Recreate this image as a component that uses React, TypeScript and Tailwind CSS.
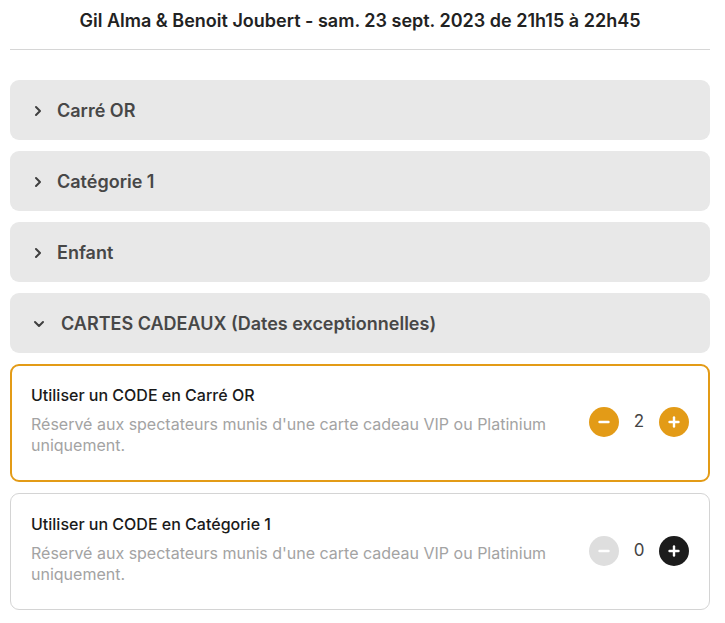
import { useState } from 'react';

type Section = { label: string; open?: boolean };

const SECTIONS: Section[] = [
  { label: 'Carré OR' },
  { label: 'Catégorie 1' },
  { label: 'Enfant' },
  { label: 'CARTES CADEAUX (Dates exceptionnelles)', open: true },
];

const DESC = "Réservé aux spectateurs munis d'une carte cadeau VIP ou Platinium uniquement.";

function ChevronRight() {
  return (
    <svg width="8" height="12" viewBox="0 0 8 12" className="ml-[1px]">
      <path d="M2 2l4 4-4 4" fill="none" stroke="#3f3f3f" strokeWidth="2" strokeLinecap="round" strokeLinejoin="round" />
    </svg>
  );
}

function ChevronDown() {
  return (
    <svg width="12" height="8" viewBox="0 0 12 8">
      <path d="M2 2l4 4 4-4" fill="none" stroke="#3f3f3f" strokeWidth="2" strokeLinecap="round" strokeLinejoin="round" />
    </svg>
  );
}

function RoundButton({ kind, tone }: { kind: 'minus' | 'plus'; tone: 'orange' | 'grey' | 'black' }) {
  const bg = tone === 'orange' ? 'bg-[#e39b17]' : tone === 'grey' ? 'bg-[#dedede]' : 'bg-[#1c1c1c]';
  return (
    <button className={`flex h-[30px] w-[30px] items-center justify-center rounded-full ${bg}`}>
      <svg width="12" height="12" viewBox="0 0 12 12">
        <path d="M1.5 6h9" stroke="#fff" strokeWidth="2.4" strokeLinecap="round" />
        {kind === 'plus' && <path d="M6 1.5v9" stroke="#fff" strokeWidth="2.4" strokeLinecap="round" />}
      </svg>
    </button>
  );
}

function CodeCard({ title, initial, active }: { title: string; initial: number; active: boolean }) {
  const [count, setCount] = useState(initial);
  return (
    <div
      className={
        active
          ? 'flex items-center gap-[40px] rounded-[9px] border-2 border-[#e39b17] pb-[24px] pl-[19px] pr-[19px] pt-[19px]'
          : 'flex items-center gap-[40px] rounded-[9px] border border-[#d4d4d4] pb-[24px] pl-[20px] pr-[20px] pt-[20px]'
      }
    >
      <div className="flex-1">
        <div className="text-[16px] font-medium leading-[20px] text-[#1a1a1a]">{title}</div>
        <div className="mt-[9px] text-[16px] leading-[21px] text-[#a3a3a3]">{DESC}</div>
      </div>
      <div className="flex items-center pt-[3px]">
        <span onClick={() => setCount((c) => Math.max(0, c - 1))}>
          <RoundButton kind="minus" tone={count > 0 ? 'orange' : 'grey'} />
        </span>
        <span className="w-[40px] text-center text-[17px] text-[#444]">{count}</span>
        <span onClick={() => setCount((c) => c + 1)}>
          <RoundButton kind="plus" tone={count > 0 ? 'orange' : 'black'} />
        </span>
      </div>
    </div>
  );
}

export default function App() {
  return (
    <div className="min-h-screen bg-white pl-[10px] pr-[15px] font-['Inter',sans-serif]">
      <div className="flex h-[40px] items-center justify-center pt-[1px] text-[18px] font-semibold text-[#222]">
        Gil Alma &amp; Benoit Joubert - sam. 23 sept. 2023 de 21h15 à 22h45
      </div>
      <div className="mt-[9px] h-px bg-[#d6d6d6]" />

      <div className="mt-[30px] flex flex-col gap-[11px]">
        {SECTIONS.map((s) => (
          <div
            key={s.label}
            className="flex h-[60px] items-center rounded-[9px] bg-[#e8e8e8] pl-[23px] pt-[1px]"
          >
            {s.open ? (
              <>
                <ChevronDown />
                <span className="ml-[16px] text-[18px] font-semibold text-[#474747]">{s.label}</span>
              </>
            ) : (
              <>
                <ChevronRight />
                <span className="ml-[15px] text-[18px] font-semibold text-[#474747]">{s.label}</span>
              </>
            )}
          </div>
        ))}

        <CodeCard title="Utiliser un CODE en Carré OR" initial={2} active />
        <CodeCard title="Utiliser un CODE en Catégorie 1" initial={0} active={false} />
      </div>
    </div>
  );
}
